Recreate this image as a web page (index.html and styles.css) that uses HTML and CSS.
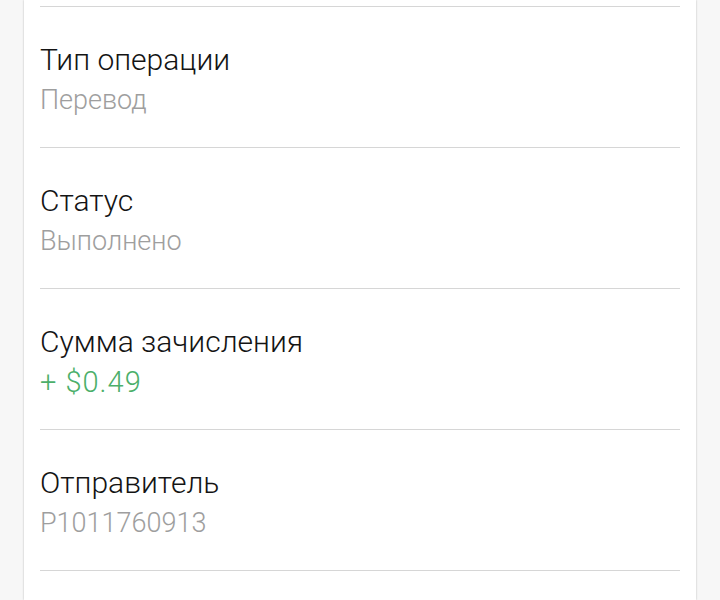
FILE: index.html
```html
<!DOCTYPE html>
<html lang="ru">

<head>
    <meta charset="UTF-8">
    <meta name="viewport" content="width=device-width, initial-scale=1.0">
    <title>Операция</title>
    <link rel="stylesheet" href="styles.css">
</head>

<body>
    <div class="card">
        <div class="row">
            <p class="label">Тип операции</p>
            <p class="value">Перевод</p>
        </div>
        <div class="row">
            <p class="label">Статус</p>
            <p class="value">Выполнено</p>
        </div>
        <div class="row">
            <p class="label">Сумма зачисления</p>
            <p class="value green">+ $0.49</p>
        </div>
        <div class="row">
            <p class="label">Отправитель</p>
            <p class="value">P1011760913</p>
        </div>
        <div class="row"></div>
    </div>
</body>

</html>
```

FILE: styles.css
```css
* {
    padding: 0;
    margin: 0;
}

body {
    background-color: #f7f7f7;
    font-family: Roboto, "Noto Sans", sans-serif;
    overflow: hidden;
}

.card {
    margin: 0 24px;
    padding: 6px 16px 0;
    height: 594px;
    background-color: #fff;
    box-shadow: 0 0 2px rgba(0, 0, 0, 0.25);
}

.row {
    border-top: 1px solid #d6d6d6;
    padding: 33px 0 27px;
}

.label {
    font-size: 30px;
    font-weight: 300;
    line-height: 40px;
    color: #141414;
}

.value {
    font-size: 27px;
    font-weight: 300;
    line-height: 40px;
    color: #9e9e9e;
}

.green {
    font-size: 29px;
    letter-spacing: 1px;
    color: #4caf6a;
}
```
